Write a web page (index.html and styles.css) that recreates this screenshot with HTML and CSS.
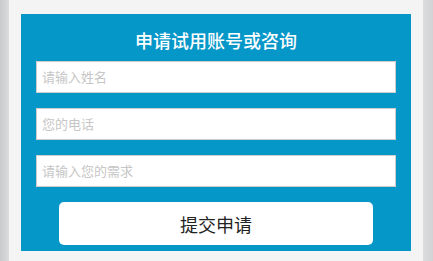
FILE: index.html
```html
<!DOCTYPE html>
<html>
<head>
    <title>申请试用账号或咨询</title>
    <meta name="viewport" content="width=device-width, initial-scale=1.0">
    <link rel="stylesheet" href="styles.css">
</head>
<body>
    <div class="page">
        <div class="apply-box">
            <h2>申请试用账号或咨询</h2>
            <input class="field" type="text" placeholder="请输入姓名">
            <input class="field" type="text" placeholder="您的电话">
            <input class="field" type="text" placeholder="请输入您的需求">
            <button class="submit-btn">提交申请</button>
        </div>
    </div>
</body>
</html>
```

FILE: styles.css
```css
/* 基础样式 */
body {
    margin: 0;
    background: linear-gradient(to right, #c9cacd 0, #dcdcde 9px, #dcdcde calc(100% - 10px), #d2d3d5 100%);
    font-family: "Liberation Sans", "Noto Sans CJK SC", sans-serif;
    height: 261px;
    overflow: hidden;
}

.page {
    margin: 0 10px 0 9px;
    background: #f4f4f4;
    padding: 14px 12px 10px;
    height: 261px;
    box-sizing: border-box;
}

/* 申请表单 */
.apply-box {
    background: #0697c9;
    padding: 12px 15px 6px;
    display: flex;
    flex-direction: column;
}

.apply-box h2 {
    margin: 0 0 3px;
    color: #fff;
    font-size: 18px;
    font-weight: 500;
    line-height: 32px;
    text-align: center;
}

.field {
    height: 32px;
    box-sizing: border-box;
    border: 1px solid #cccccc;
    padding: 0 5px;
    margin: 0 0 15px;
    font-size: 13px;
    font-family: inherit;
    outline: none;
}

.field::placeholder {
    color: #c6c6c6;
}

.submit-btn {
    width: 314px;
    height: 43px;
    margin: 0 auto;
    border: none;
    border-radius: 5px;
    background: #fff;
    color: #222;
    font-size: 18px;
    font-family: inherit;
    cursor: pointer;
}
```
